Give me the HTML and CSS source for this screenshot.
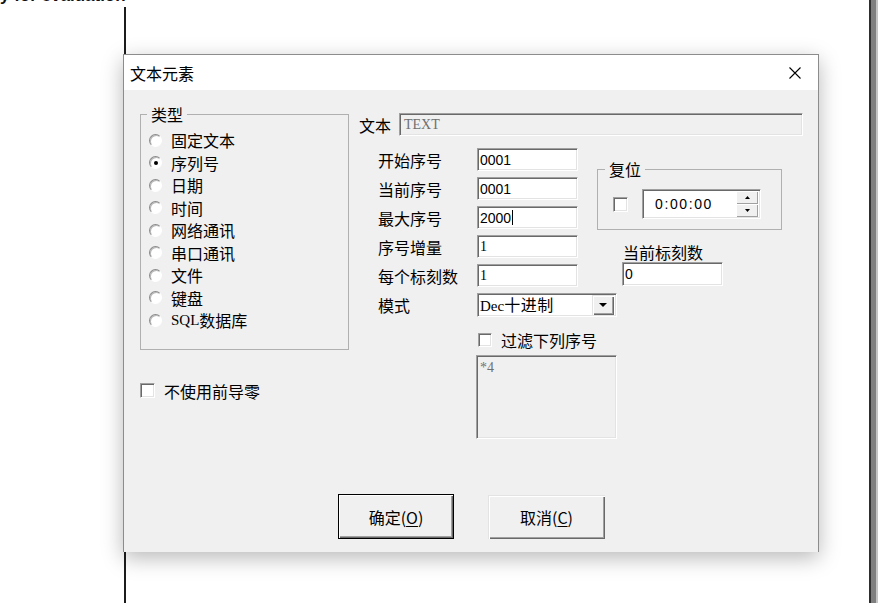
FILE: index.html
```html
<!DOCTYPE html>
<html lang="zh-CN">
<head>
<meta charset="utf-8">
<title>文本元素</title>
<link rel="stylesheet" href="styles.css">
</head>
<body>
<div class="desktop">
  <div class="workspace">
    <div class="banner"><span>y for evaluation</span></div>
    <div class="canvas"></div>
  </div>
  <div class="scrollbar"></div>
</div>

<div class="dialog">
  <div class="titlebar">
    <span class="title">文本元素</span>
    <span class="close">
      <svg width="12" height="12" viewBox="0 0 12 12"><path d="M0.5 0.5 L11.5 11.5 M11.5 0.5 L0.5 11.5" stroke="#000" stroke-width="1.1" fill="none"/></svg>
    </span>
  </div>
  <div class="dlg-body">
    <div class="dlg-main">
      <div class="left-col">
        <fieldset class="group type-group">
          <legend>类型</legend>
          <ul class="radio-list">
            <li><span class="radio"></span>固定文本</li>
            <li><span class="radio checked"></span>序列号</li>
            <li><span class="radio"></span>日期</li>
            <li><span class="radio"></span>时间</li>
            <li><span class="radio"></span>网络通讯</li>
            <li><span class="radio"></span>串口通讯</li>
            <li><span class="radio"></span>文件</li>
            <li><span class="radio"></span>键盘</li>
            <li><span class="radio"></span><span class="latin">SQL</span>数据库</li>
          </ul>
        </fieldset>
        <div class="check-row nolead"><span class="checkbox"></span>不使用前导零</div>
      </div>

      <div class="right-col">
        <div class="text-row">
          <span class="lbl-inline">文本</span>
          <div class="field disabled">TEXT</div>
        </div>
        <div class="fields">
          <span class="lbl">开始序号</span><div class="field num">0001</div>
          <span class="lbl">当前序号</span><div class="field num">0001</div>
          <span class="lbl">最大序号</span><div class="field num">2000<span class="caret"></span></div>
          <span class="lbl">序号增量</span><div class="field serif">1</div>
          <span class="lbl">每个标刻数</span><div class="field serif">1</div>

          <div class="side">
            <fieldset class="group reset">
              <legend>复位</legend>
              <div class="reset-row">
                <span class="checkbox"></span>
                <div class="timefield">
                  <span class="time">0:00:00</span>
                  <div class="spin">
                    <span class="spin-btn"><svg width="5" height="3" viewBox="0 0 5 3"><path d="M2.5 0 L5 3 L0 3 Z" fill="#000"/></svg></span>
                    <span class="spin-btn"><svg width="5" height="3" viewBox="0 0 5 3"><path d="M0 0 L5 0 L2.5 3 Z" fill="#000"/></svg></span>
                  </div>
                </div>
              </div>
            </fieldset>
            <span class="side-lbl">当前标刻数</span>
            <div class="field num side-field">0</div>
          </div>

          <span class="lbl">模式</span>
          <div class="select">
            <span class="value"><span class="latin-serif">Dec</span>十进制</span>
            <span class="drop"><svg width="8" height="4" viewBox="0 0 8 4"><path d="M0 0 L8 0 L4 4 Z" fill="#000"/></svg></span>
          </div>

          <div class="check-row filter"><span class="checkbox"></span>过滤下列序号</div>

          <div class="textarea">*4</div>
        </div>
      </div>
    </div>

    <div class="buttons">
      <button class="btn btn-default">确定(<u>O</u>)</button>
      <button class="btn">取消(<u>C</u>)</button>
    </div>
  </div>
</div>
</body>
</html>
```

FILE: styles.css
```css
* { box-sizing: border-box; }
html, body { margin: 0; padding: 0; }
body {
  width: 893px;
  height: 603px;
  overflow: hidden;
  background: #fff;
  font-family: "Noto Sans CJK SC", "Liberation Sans", sans-serif;
  position: relative;
  color: #000;
}

/* background application */
.desktop {
  display: grid;
  grid-template-columns: 869px 9px;
  height: 603px;
}
.workspace { display: flex; flex-direction: column; }
.banner {
  height: 7px;
  font: bold 17px/16px "Liberation Sans", Arial, sans-serif;
  color: #111;
  white-space: nowrap;
}
.banner span { display: block; margin-top: -12px; }
.canvas {
  flex: 1;
  margin-left: 124px;
  border-left: 2px solid #1c1c1c;
}
.scrollbar {
  background: #7f7f7f;
  border-left: 2px solid #2e2e2e;
  border-right: 2px solid #c4c4c4;
}

/* dialog window */
.dialog {
  position: absolute;
  left: 123px;
  top: 54px;
  width: 696px;
  height: 498px;
  display: flex;
  flex-direction: column;
  border: 1px solid #8c8c8c;
  border-bottom: none;
  background: #f0f0f0;
  box-shadow: 0 6px 20px rgba(0, 0, 0, 0.28);
}
.titlebar {
  height: 35px;
  flex: none;
  background: #fff;
  display: flex;
  align-items: center;
  justify-content: space-between;
}
.title { padding-left: 6px; font-size: 16px; line-height: 20px; }
.close {
  width: 46px;
  height: 35px;
  display: flex;
  align-items: center;
  justify-content: center;
}

.dlg-body {
  flex: 1;
  display: flex;
  flex-direction: column;
  padding: 15px 15px 13px 16px;
  font-size: 16px;
  line-height: 18px;
}
.dlg-main {
  display: grid;
  grid-template-columns: 209px 1fr;
  column-gap: 10px;
  align-items: start;
}

/* group boxes */
.group {
  margin: 0;
  padding: 0;
  border: 1px solid #b0b0b0;
  min-width: 0;
}
.group legend {
  margin-left: 6px;
  padding: 0 4px;
  line-height: 18px;
  font-size: 16px;
}

.radio-list {
  list-style: none;
  margin: 0;
  padding: 6px 0 17px 8px;
}
.radio-list li {
  height: 22.5px;
  display: flex;
  align-items: center;
}
.latin { font-family: "Liberation Serif", serif; font-size: 15px; }
.radio {
  width: 13px;
  height: 13px;
  flex: none;
  border-radius: 50%;
  background: #fff;
  border: 1px solid;
  border-color: #8a8a8a #fff #fff #8a8a8a;
  box-shadow: inset 1px 1px 0 #b8b8b8;
  margin-right: 9px;
  display: flex;
  align-items: center;
  justify-content: center;
}
.radio.checked::after {
  content: "";
  width: 4px;
  height: 4px;
  border-radius: 50%;
  background: #000;
}

.checkbox {
  width: 14px;
  height: 14px;
  flex: none;
  background: #fff;
  border: 1px solid;
  border-color: #a0a0a0 #fff #fff #a0a0a0;
  box-shadow: inset 1px 1px 0 #696969, inset -1px -1px 0 #e3e3e3;
}
.check-row {
  display: flex;
  align-items: center;
  height: 18px;
}
.nolead { margin-top: 32px; }
.nolead .checkbox { margin-right: 9px; width: 15px; height: 15px; }

/* right column */
.text-row {
  display: flex;
  align-items: center;
  gap: 8px;
  margin-top: 8px;
  height: 23px;
}
.lbl-inline { flex: none; }
.text-row .field { flex: 1; }

.field {
  height: 23px;
  background: #fff;
  border: 1px solid;
  border-color: #a0a0a0 #fff #fff #a0a0a0;
  box-shadow: inset 1px 1px 0 #696969, inset -1px -1px 0 #e3e3e3;
  padding: 0 2px;
  display: flex;
  align-items: center;
  white-space: nowrap;
}
.field.num { font-family: "Liberation Sans", Arial, sans-serif; font-size: 14px; }
.field.serif { font-family: "Liberation Serif", serif; font-size: 14px; }
.field.disabled {
  background: #f0f0f0;
  color: #6f6f6f;
  font-family: "Liberation Serif", serif;
  font-size: 14px;
  padding-left: 4px;
}
.caret {
  display: inline-block;
  width: 1px;
  height: 15px;
  background: #000;
  margin-left: 1px;
}

.fields {
  margin-top: 12px;
  padding-left: 19px;
  display: grid;
  grid-template-columns: 99px 101px 19px 185px;
  grid-template-rows: repeat(5, 23px) 24px 26px 84px;
  row-gap: 6px;
}
.lbl { grid-column: 1; align-self: center; white-space: nowrap; }
.fields > .field { grid-column: 2; }

.side {
  grid-column: 4;
  grid-row: 1 / span 5;
  display: flex;
  flex-direction: column;
  align-items: flex-start;
}
.reset { margin-top: 12px; width: 185px; }
.reset legend { margin-left: 7px; }
.reset-row {
  display: flex;
  align-items: center;
  gap: 14px;
  padding: 11px 0 10px 15px;
}
.reset-row .checkbox { width: 15px; height: 15px; }
.timefield {
  width: 119px;
  height: 30px;
  background: #fff;
  border: 1px solid;
  border-color: #a0a0a0 #fff #fff #a0a0a0;
  box-shadow: inset 1px 1px 0 #696969, inset -1px -1px 0 #e3e3e3;
  display: flex;
  align-items: center;
  padding: 1px 2px 1px 12px;
}
.time {
  flex: 1;
  font-family: "Liberation Sans", Arial, sans-serif;
  font-size: 14px;
  letter-spacing: 1.6px;
}
.spin {
  width: 22px;
  height: 26px;
  display: flex;
  flex-direction: column;
}
.spin-btn {
  flex: 1;
  background: #f0f0f0;
  display: flex;
  align-items: center;
  justify-content: center;
  box-shadow: inset 1px 1px 0 #fff, inset -1px -1px 0 #a0a0a0;
}
.side-lbl { margin: 13px 0 0 26px; white-space: nowrap; }
.side-field { width: 101px; height: 24px; margin: 1px 0 0 25px; }

.select {
  grid-column: 2 / span 3;
  grid-row: 6;
  justify-self: start;
  width: 140px;
  height: 24px;
  background: #fff;
  border: 1px solid;
  border-color: #a0a0a0 #fff #fff #a0a0a0;
  box-shadow: inset 1px 1px 0 #696969, inset -1px -1px 0 #e3e3e3;
  display: flex;
  align-items: center;
  padding: 1px 2px 1px 2px;
}
.select .value { flex: 1; white-space: nowrap; letter-spacing: 0.5px; }
.latin-serif { font-family: "Liberation Serif", serif; font-size: 15px; letter-spacing: 0; }
.select .drop {
  width: 22px;
  height: 20px;
  background: #f0f0f0;
  box-shadow: inset 1px 1px 0 #e3e3e3, inset 2px 2px 0 #fff, inset -1px -1px 0 #696969, inset -2px -2px 0 #a0a0a0;
  display: flex;
  align-items: center;
  justify-content: center;
}

.filter {
  grid-column: 2 / span 3;
  grid-row: 7;
  align-self: end;
  padding-left: 1px;
}
.filter .checkbox { margin-right: 9px; }

.textarea {
  grid-column: 2 / span 3;
  grid-row: 8;
  justify-self: start;
  margin-left: -1px;
  width: 141px;
  height: 84px;
  background: #f0f0f0;
  color: #707070;
  border: 1px solid;
  border-color: #a0a0a0 #fff #fff #a0a0a0;
  box-shadow: inset 1px 1px 0 #696969, inset -1px -1px 0 #e3e3e3;
  font-family: "Liberation Serif", serif;
  font-size: 14px;
  line-height: 16px;
  padding: 4px 3px;
}

/* buttons */
.buttons {
  margin-top: auto;
  display: flex;
  justify-content: center;
  align-items: flex-end;
  gap: 34px;
}
.btn {
  width: 117px;
  height: 44px;
  background: #f0f0f0;
  border: none;
  font-family: "Noto Sans CJK SC", sans-serif;
  font-size: 16px;
  line-height: 18px;
  color: #000;
  padding: 0;
  box-shadow: inset 1px 1px 0 #e3e3e3, inset 2px 2px 0 #fff, inset -1px -1px 0 #696969, inset -2px -2px 0 #a0a0a0;
}
.btn-default {
  width: 116px;
  height: 45px;
  border: 1px solid #000;
  box-shadow: inset 1px 1px 0 #fff, inset -1px -1px 0 #696969, inset -2px -2px 0 #a0a0a0;
}
.btn u { text-underline-offset: 2px; }
```
